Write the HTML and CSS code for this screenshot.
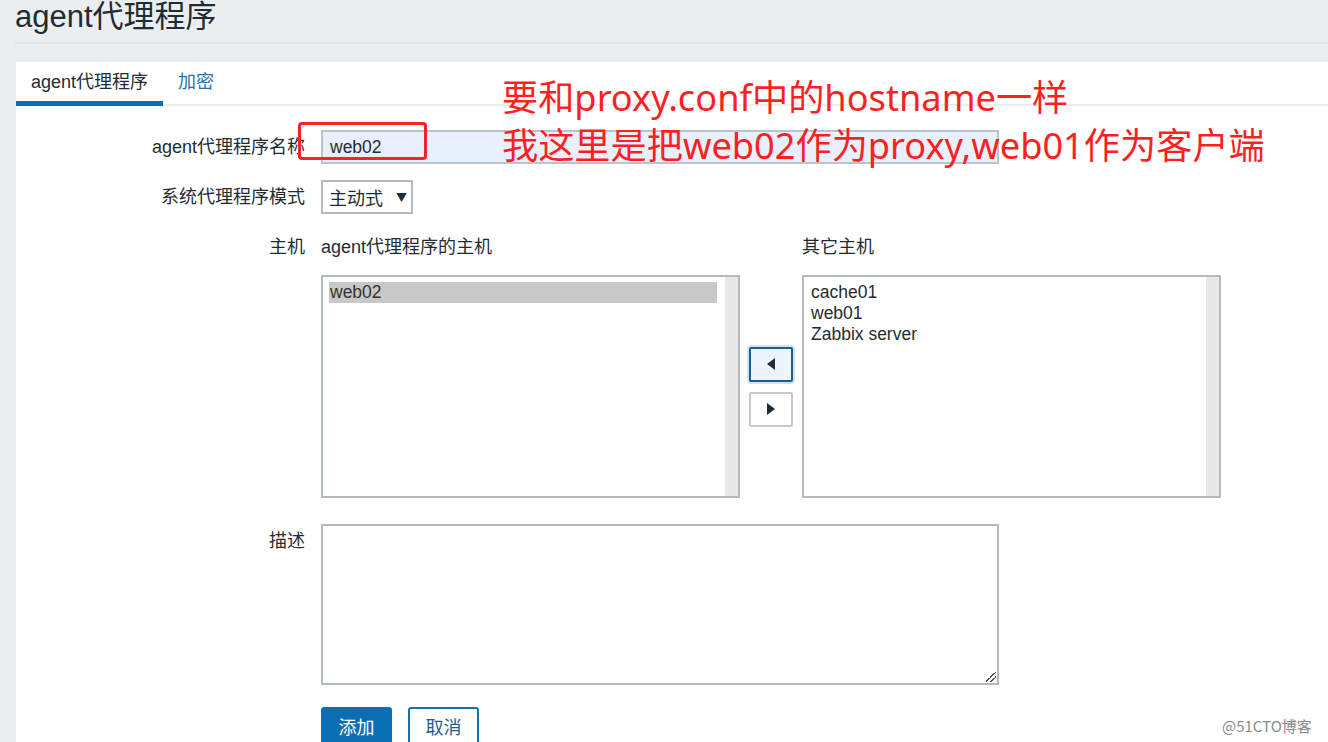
FILE: index.html
```html
<!DOCTYPE html>
<html lang="zh-CN">
<head>
<meta charset="utf-8">
<title>agent代理程序</title>
<link rel="stylesheet" href="styles.css">
</head>
<body>
<header class="page-header">
  <h1 class="page-title">agent代理程序</h1>
</header>
<main class="panel">
  <nav class="tabs">
    <a class="tab tab-active">agent代理程序</a>
    <a class="tab tab-link">加密</a>
  </nav>
  <div class="form">
    <div class="row row-name">
      <div class="label">agent代理程序名称</div>
      <div class="field"><div class="text-input">web02</div></div>
    </div>
    <div class="row row-mode">
      <div class="label">系统代理程序模式</div>
      <div class="field"><div class="select">主动式<span class="caret">▼</span></div></div>
    </div>
    <div class="row row-hosts">
      <div class="label label-top">主机</div>
      <div class="field">
        <div class="twin">
          <div class="twin-head">agent代理程序的主机</div>
          <div></div>
          <div class="twin-head">其它主机</div>
          <div class="listbox">
            <div class="list-items">
              <div class="item item-selected">web02</div>
            </div>
            <div class="scrolltrack"></div>
          </div>
          <div class="movers">
            <div class="mover mover-focus"><span class="tri tri-left"></span></div>
            <div class="mover"><span class="tri tri-right"></span></div>
          </div>
          <div class="listbox">
            <div class="list-items">
              <div class="item">cache01</div>
              <div class="item">web01</div>
              <div class="item">Zabbix server</div>
            </div>
            <div class="scrolltrack"></div>
          </div>
        </div>
      </div>
    </div>
    <div class="row row-desc">
      <div class="label label-desc">描述</div>
      <div class="field"><div class="textarea"><span class="grip"></span></div></div>
    </div>
    <div class="row row-buttons">
      <div></div>
      <div class="field buttons">
        <div class="btn btn-primary">添加</div>
        <div class="btn btn-alt">取消</div>
      </div>
    </div>
  </div>
</main>
<div class="annotation">要和proxy.conf中的hostname一样<br>我这里是把web02作为proxy,web01作为客户端</div>
<div class="redbox"></div>
<div class="watermark">@51CTO博客</div>
</body>
</html>
```

FILE: styles.css
```css
html, body {
  margin: 0;
  padding: 0;
}
body {
  width: 1328px;
  height: 742px;
  overflow: hidden;
  background: #ebeef0;
  font-family: "Liberation Sans", "Noto Sans CJK SC", sans-serif;
  color: #1f2c33;
  position: relative;
}
.page-header {
  margin-left: 15px;
  height: 42px;
  border-bottom: 2px solid #dde2e5;
}
.page-title {
  margin: 0;
  font-weight: normal;
  font-size: 31px;
  line-height: 34px;
  color: #1f2c33;
}
.panel {
  margin-top: 18px;
  margin-left: 16px;
  background: #ffffff;
  height: 700px;
}
.tabs {
  display: flex;
  height: 42px;
  border-bottom: 2px solid #ebeef0;
}
.tab {
  display: block;
  font-size: 18px;
  line-height: 40px;
  padding: 0 15px;
  height: 39px;
  margin-bottom: -2px;
  border-bottom: 5px solid transparent;
}
.tab-active {
  border-bottom-color: #0a6eb4;
  color: #1f2c33;
}
.tab-link {
  color: #2b6ea8;
}
.form {
  padding-top: 24px;
}
.row {
  display: grid;
  grid-template-columns: 289px 1fr;
  column-gap: 16px;
  align-items: center;
}
.label {
  text-align: right;
  font-size: 18px;
  line-height: 22px;
  color: #1f2c33;
}
.label-top {
  align-self: start;
}
.label-desc {
  align-self: start;
  padding-top: 6px;
}
.row-name {
  height: 34px;
}
.row-mode {
  height: 34px;
  margin-top: 16px;
}
.row-hosts {
  margin-top: 22px;
}
.row-desc {
  margin-top: 26px;
}
.row-buttons {
  margin-top: 22px;
}
.text-input {
  box-sizing: border-box;
  width: 678px;
  height: 34px;
  border: 2px solid #b9c3ca;
  background: #e8f0fe;
  font-size: 17.5px;
  line-height: 30px;
  padding-left: 7px;
  color: #1f2c33;
}
.select {
  box-sizing: border-box;
  width: 92px;
  height: 34px;
  border: 2px solid #b4bbbf;
  background: #fff;
  font-size: 18px;
  line-height: 30px;
  padding-left: 6px;
  display: flex;
  align-items: center;
  color: #1f2c33;
  font-family: "Noto Sans CJK SC", sans-serif;
}
.caret {
  font-size: 11px;
  margin-left: 13px;
  color: #1f2c33;
}
.twin {
  display: grid;
  grid-template-columns: 419px 44px 419px;
  grid-template-rows: 22px 223px;
  column-gap: 9px;
  row-gap: 17px;
}
.twin-head {
  font-size: 18px;
  line-height: 22px;
  color: #1f2c33;
}
.listbox {
  box-sizing: border-box;
  border: 2px solid #b4b9bc;
  background: #fff;
  display: flex;
  height: 223px;
}
.list-items {
  flex: 1;
  padding: 5px 8px 0 6px;
}
.item {
  font-size: 17.5px;
  line-height: 21px;
  color: #1f2c33;
  padding-left: 1px;
}
.item-selected {
  background: #c8c8c8;
  color: #333;
}
.scrolltrack {
  width: 13px;
  background: #e8e8e8;
}
.movers {
  display: flex;
  flex-direction: column;
  justify-content: center;
  gap: 10px;
}
.mover {
  box-sizing: border-box;
  width: 44px;
  height: 35px;
  border: 2px solid #c6cacc;
  border-radius: 2px;
  background: #fff;
  display: flex;
  align-items: center;
  justify-content: center;
}
.mover-focus {
  border-color: #1c5d8f;
  background: #eef4fb;
  box-shadow: 0 0 0 2px #cfe3f5;
}
.tri {
  width: 0;
  height: 0;
  border-top: 6px solid transparent;
  border-bottom: 6px solid transparent;
}
.tri-left {
  border-right: 8px solid #1f2c33;
}
.tri-right {
  border-left: 8px solid #1f2c33;
}
.textarea {
  box-sizing: border-box;
  width: 678px;
  height: 161px;
  border: 2px solid #b4bbbf;
  background: #fff;
  position: relative;
}
.grip {
  position: absolute;
  right: 1px;
  bottom: 1px;
  width: 10px;
  height: 10px;
  background: linear-gradient(135deg, transparent 45%, #555 45%, #555 52%, transparent 52%, transparent 70%, #555 70%, #555 77%, transparent 77%);
}
.buttons {
  display: flex;
  gap: 16px;
}
.btn {
  box-sizing: border-box;
  width: 71px;
  height: 38px;
  border-radius: 3px;
  font-size: 18px;
  line-height: 34px;
  text-align: center;
  font-family: "Noto Sans CJK SC", sans-serif;
}
.btn-primary {
  background: #0a6eb4;
  border: 2px solid #0a6eb4;
  color: #fff;
}
.btn-alt {
  background: #fff;
  border: 2px solid #1a6fae;
  color: #1f5e8e;
}
.annotation {
  position: absolute;
  left: 502px;
  top: 73px;
  font-family: "Noto Sans", "Noto Sans CJK SC", sans-serif;
  font-size: 36.2px;
  line-height: 48px;
  color: #ff1f1f;
  white-space: nowrap;
}
.redbox {
  position: absolute;
  left: 298px;
  top: 122px;
  width: 123px;
  height: 32px;
  border: 3px solid #f4232a;
  border-radius: 4px;
}
.watermark {
  position: absolute;
  left: 1222px;
  top: 715px;
  font-family: "Noto Sans CJK SC", sans-serif;
  font-size: 15px;
  color: #8a8a8a;
}
```
